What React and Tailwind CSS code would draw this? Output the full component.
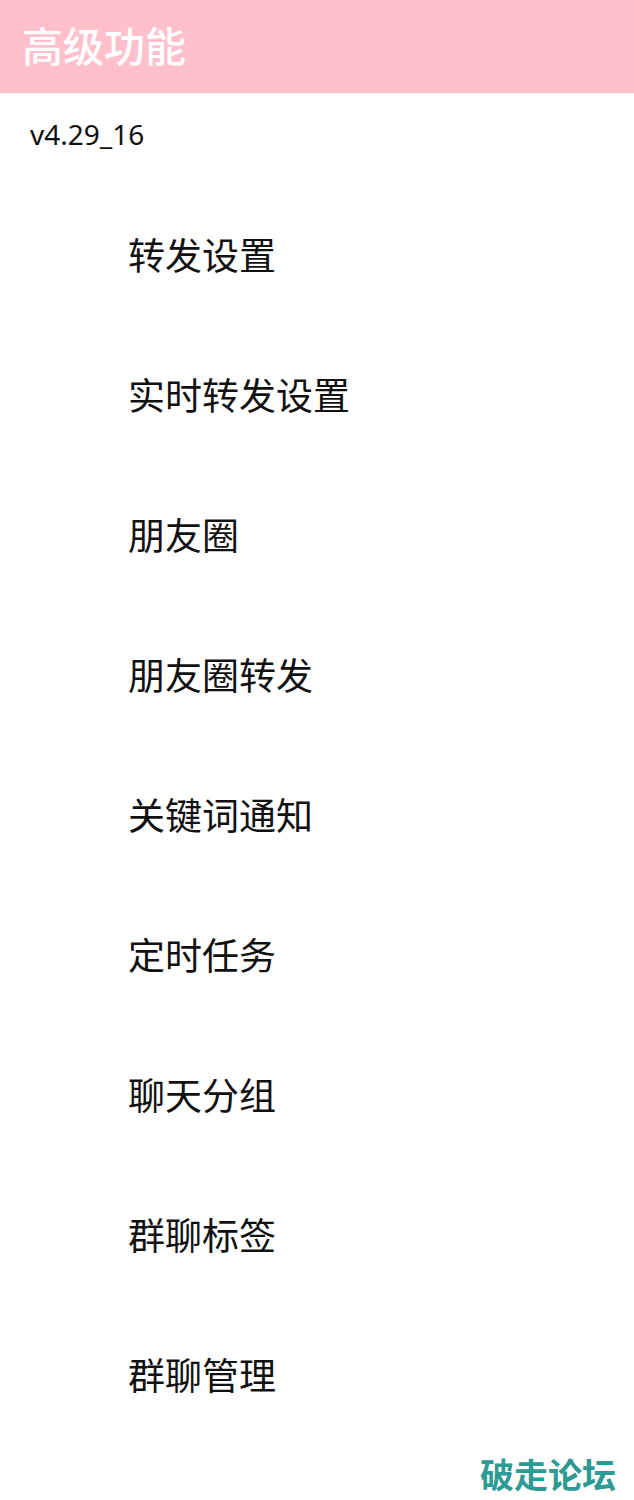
import React from 'react'

const items = ['转发设置', '实时转发设置', '朋友圈', '朋友圈转发', '关键词通知', '定时任务', '聊天分组', '群聊标签', '群聊管理']

export default function App() {
  return (
    <div
      className="relative min-h-[1500px] w-full overflow-hidden bg-white text-[#111]"
      style={{ fontFamily: '"Noto Sans", "Noto Sans CJK SC", sans-serif' }}
    >
      <header className="flex h-[93px] items-center bg-[#ffc0cb] px-[22px]">
        <h1 className="text-[41px] font-medium leading-none text-white">高级功能</h1>
      </header>

      <div className="flex h-[82px] items-center px-[30px] text-[28px] leading-none">v4.29_16</div>

      <ul className="mt-[10px]">
        {items.map((t) => (
          <li key={t} className="flex h-[140px] items-center pl-[128px] text-[37px] leading-none">
            {t}
          </li>
        ))}
      </ul>

      <div className="absolute bottom-[8px] right-[18px] text-[34px] font-bold leading-none text-[#2e9a94]">
        破走论坛
      </div>
    </div>
  )
}
